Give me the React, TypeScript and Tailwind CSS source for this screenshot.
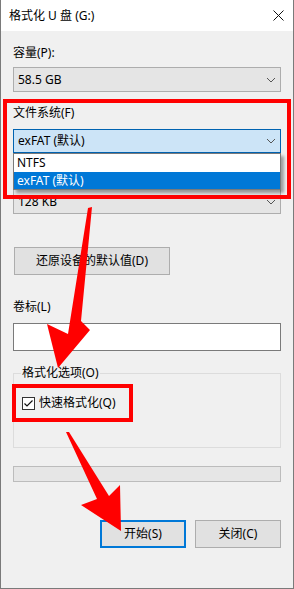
import React from "react";

const font = { fontFamily: "'Noto Sans', 'Noto Sans CJK SC', sans-serif" };

function Chevron() {
  return (
    <svg width="10" height="6" viewBox="0 0 10 6" className="shrink-0">
      <polyline points="1,1 5,5 9,1" fill="none" stroke="#555" strokeWidth="1" />
    </svg>
  );
}

function Combo({ value, focused, h }: { value: string; focused?: boolean; h: string }) {
  return (
    <div
      className={
        "flex items-center justify-between pl-[4px] pr-[4px] border text-[12px] text-black " +
        h +
        (focused ? " bg-[#cce4f7] border-[#0063b1]" : " bg-[#e5e5e5] border-[#adadad]")
      }
    >
      <span className="leading-none">{value}</span>
      <Chevron />
    </div>
  );
}

export default function App() {
  return (
    <div
      className="relative w-[294px] h-[589px] bg-[#f0f0f0] border-x border-b border-[#7a7a7a] flex flex-col overflow-hidden text-black"
      style={font}
    >
      {/* title bar */}
      <div className="h-[31px] bg-white flex items-center justify-between pl-[8px] pr-[9px] shrink-0">
        <span className="text-[12px] leading-none">格式化 U 盘 (G:)</span>
        <svg width="11" height="11" viewBox="0 0 11 11">
          <path d="M0.5 0.5 L10.5 10.5 M10.5 0.5 L0.5 10.5" stroke="#111" strokeWidth="1" />
        </svg>
      </div>

      {/* body */}
      <div className="flex flex-col px-[12px] text-[12px]">
        <div className="mt-[14px] h-[16px] leading-[16px]">容量(P):</div>
        <div className="mt-[6px]">
          <Combo value="58.5 GB" h="h-[25px]" />
        </div>

        <div className="mt-[13px] h-[16px] leading-[16px]">文件系统(F)</div>
        <div className="mt-[8px]">
          <Combo value="exFAT (默认)" focused h="h-[24px]" />
        </div>

        {/* label row hidden beneath the open list */}
        <div className="mt-[14px] h-[16px]" />
        <div className="mt-[6px]">
          <Combo value="128 KB" h="h-[25px]" />
        </div>

        <div className="mt-[33px] pl-[1px]">
          <div className="w-[156px] h-[28px] bg-[#e1e1e1] border border-[#adadad] flex items-center justify-center leading-none">
            还原设备的默认值(D)
          </div>
        </div>

        <div className="mt-[24px] h-[16px] leading-[16px]">卷标(L)</div>
        <div className="mt-[8px] h-[28px] bg-white border border-[#7a7a7a]" />

        <fieldset className="mt-[14px] border border-[#dcdcdc] pl-[7px] pb-[36px]">
          <legend className="px-[1px] h-[16px] leading-[16px]">格式化选项(O)</legend>
          <div className="mt-[14px] h-[16px] flex items-center gap-[4px] pl-[1px]">
            <svg width="13" height="13" viewBox="0 0 13 13" className="shrink-0">
              <rect x="0.5" y="0.5" width="12" height="12" fill="#fff" stroke="#333" />
              <polyline points="2.5,6.5 5,9 10.5,3.5" fill="none" stroke="#111" strokeWidth="1.2" />
            </svg>
            <span className="leading-none">快速格式化(Q)</span>
          </div>
        </fieldset>

        <div className="mt-[18px] h-[16px] bg-[#e6e6e6] border border-[#bcbcbc]" />

        <div className="mt-[38px] flex justify-end gap-[9px]">
          <div className="w-[86px] h-[28px] bg-[#e1e1e1] border-2 border-[#0078d7] flex items-center justify-center leading-none">
            开始(S)
          </div>
          <div className="w-[86px] h-[28px] bg-[#e1e1e1] border border-[#adadad] flex items-center justify-center leading-none">
            关闭(C)
          </div>
        </div>
      </div>

      {/* dropdown list overlay */}
      <div className="absolute left-[12px] top-[153px] w-[268px] h-[37px] bg-white border border-[#7a7a7a] shadow-[3px_3px_3px_rgba(0,0,0,0.35)] flex flex-col text-[12px]">
        <div className="h-[18px] flex items-center pl-[3px] leading-none">NTFS</div>
        <div className="h-[17px] flex items-center pl-[3px] bg-[#0078d7] text-white leading-none">exFAT (默认)</div>
      </div>

      {/* red annotation boxes */}
      <div className="absolute left-[2px] top-[99px] w-[288px] h-[100px] border-[4px] border-[#ff0000] pointer-events-none" />
      <div className="absolute left-[11px] top-[384px] w-[121px] h-[38px] border-[4px] border-[#ff0000] pointer-events-none" />

      {/* arrows */}
      <svg className="absolute left-0 top-0 pointer-events-none" width="294" height="589" viewBox="0 0 294 589">
        <polygon
          points="87,208 91,207 80,321 89,330 57,368 46,324 67,334"
          fill="#ff0000"
        />
        <polygon
          points="65,432 68,432 108,496 119,485 120,531 80,505 96,499"
          fill="#ff0000"
        />
      </svg>
    </div>
  );
}
